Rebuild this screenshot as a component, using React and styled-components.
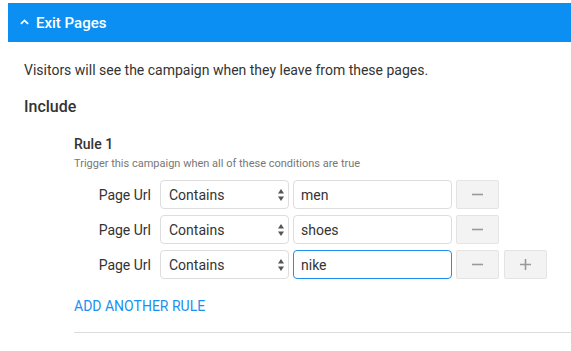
import React from "react";
import styled, { createGlobalStyle } from "styled-components";

const GlobalStyle = createGlobalStyle`
  html, body {
    margin: 0;
    background: #fff;
    font-family: Roboto, "Liberation Sans", sans-serif;
  }
`;

const conditions = [
  { field: "Page Url", op: "Contains", value: "men" },
  { field: "Page Url", op: "Contains", value: "shoes" },
  { field: "Page Url", op: "Contains", value: "nike", focused: true, last: true },
];

const App = () => {
  return (
    <>
      <GlobalStyle />
      <Page>
        <Header>
          <Chevron viewBox="0 0 10 6">
            <path d="M1 5 L5 1.2 L9 5" fill="none" stroke="#fff" strokeWidth="2" />
          </Chevron>
          Exit Pages
        </Header>
        <Body>
          <Description>
            Visitors will see the campaign when they leave from these pages.
          </Description>
          <SectionTitle>Include</SectionTitle>
          <Rule>
            <RuleTitle>Rule 1</RuleTitle>
            <RuleHint>Trigger this campaign when all of these conditions are true</RuleHint>
            <Conditions>
              {conditions.map((c, i) => (
                <Row key={i}>
                  <FieldLabel>{c.field}</FieldLabel>
                  <SelectWrap>
                    <Select defaultValue={c.op}>
                      <option>Contains</option>
                      <option>Does not contain</option>
                      <option>Equals</option>
                    </Select>
                    <Arrows viewBox="0 0 8 14">
                      <path d="M4 1 L7 5.5 L1 5.5 Z" fill="#555" />
                      <path d="M4 13 L7 8.5 L1 8.5 Z" fill="#555" />
                    </Arrows>
                  </SelectWrap>
                  <Input defaultValue={c.value} $focused={c.focused} autoFocus={c.focused} />
                  <IconButton aria-label="remove">
                    <svg width="11" height="11" viewBox="0 0 11 11">
                      <path d="M0 5.5 H11" stroke="#999" strokeWidth="1.6" />
                    </svg>
                  </IconButton>
                  {c.last && (
                    <IconButton aria-label="add">
                      <svg width="11" height="11" viewBox="0 0 11 11">
                        <path d="M0 5.5 H11 M5.5 0 V11" stroke="#999" strokeWidth="1.6" />
                      </svg>
                    </IconButton>
                  )}
                </Row>
              ))}
            </Conditions>
            <AddLink href="#">ADD ANOTHER RULE</AddLink>
            <Divider />
          </Rule>
        </Body>
      </Page>
    </>
  );
};

export default App;

const Page = styled.div`
  padding: 3px 0 0 8px;
`;

const Header = styled.div`
  display: flex;
  align-items: center;
  gap: 7px;
  height: 39px;
  padding-left: 12px;
  background: #0b8ff2;
  color: #fff;
  font-size: 15px;
  font-weight: 500;
`;

const Chevron = styled.svg`
  width: 9px;
  height: 6px;
  margin-bottom: 1px;
`;

const Body = styled.div`
  padding: 18px 0 0 16px;
`;

const Description = styled.div`
  font-size: 14px;
  line-height: 20px;
  color: #333;
`;

const SectionTitle = styled.div`
  margin-top: 17px;
  font-size: 16px;
  line-height: 20px;
  font-weight: 500;
  color: #333;
`;

const Rule = styled.div`
  margin: 18px 0 0 50px;
`;

const RuleTitle = styled.div`
  font-size: 14px;
  line-height: 18px;
  font-weight: 500;
  color: #333;
`;

const RuleHint = styled.div`
  margin-top: 4px;
  font-size: 11px;
  line-height: 14px;
  color: #777;
`;

const Conditions = styled.div`
  display: flex;
  flex-direction: column;
  gap: 6px;
  margin-top: 9px;
`;

const Row = styled.div`
  display: flex;
  align-items: center;
  height: 29px;
`;

const FieldLabel = styled.div`
  width: 77px;
  margin-right: 9px;
  text-align: right;
  font-size: 14px;
  color: #333;
`;

const SelectWrap = styled.div`
  position: relative;
  width: 129px;
  height: 29px;
  margin-right: 4px;
`;

const Select = styled.select`
  appearance: none;
  width: 100%;
  height: 100%;
  box-sizing: border-box;
  padding: 0 20px 0 8px;
  border: 1px solid #ddd;
  border-radius: 4px;
  background: #fff;
  font-family: Roboto, "Liberation Sans", sans-serif;
  font-size: 14px;
  color: #333;
  outline: none;
`;

const Arrows = styled.svg`
  position: absolute;
  right: 4px;
  top: 8px;
  width: 8px;
  height: 14px;
  pointer-events: none;
`;

const Input = styled.input`
  width: 159px;
  height: 29px;
  box-sizing: border-box;
  margin: 0 4px 0 0;
  padding: 0 7px;
  border: 1px solid ${(p) => (p.$focused ? "#1e90f0" : "#ddd")};
  border-radius: 4px;
  font-family: Roboto, "Liberation Sans", sans-serif;
  font-size: 14px;
  color: #333;
  outline: none;
  caret-color: #333;
`;

const IconButton = styled.button`
  display: flex;
  align-items: center;
  justify-content: center;
  width: 43px;
  height: 29px;
  margin-right: 5px;
  padding: 0;
  border: 1px solid #e4e4e4;
  border-radius: 2px;
  background: #f3f3f3;
  cursor: pointer;
`;

const AddLink = styled.a`
  display: block;
  margin-top: 19px;
  font-size: 14px;
  line-height: 16px;
  color: #1a90f0;
  text-decoration: none;
`;

const Divider = styled.hr`
  margin: 18px 0 0;
  border: 0;
  border-top: 1px solid #ddd;
`;
